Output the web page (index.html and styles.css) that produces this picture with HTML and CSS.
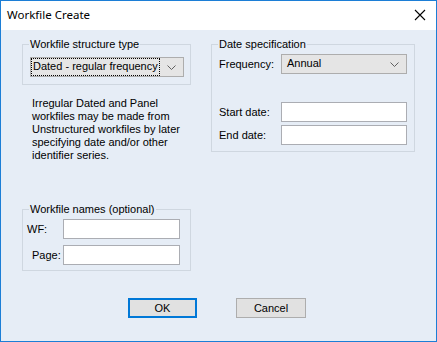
FILE: index.html
```html
<!DOCTYPE html>
<html>
<head>
<meta charset="utf-8">
<link rel="stylesheet" href="styles.css">
</head>
<body>
<div class="window">
  <div class="titlebar">
    <span class="title">Workfile Create</span>
    <svg class="close" width="12" height="12" viewBox="0 0 12 12"><path d="M1 1L11 11M11 1L1 11" stroke="#000" stroke-width="1.1" fill="none"/></svg>
  </div>
  <div class="content">
    <div class="columns">
      <div class="left">
        <fieldset class="group g-struct">
          <legend>Workfile structure type</legend>
          <div class="select">
            <span class="value focus">Dated - regular frequency</span>
            <svg class="chev" width="9" height="5" viewBox="0 0 9 5"><path d="M0.5 0.5L4.5 4.5L8.5 0.5" stroke="#606060" stroke-width="1" fill="none"/></svg>
          </div>
        </fieldset>
        <p class="note">Irregular Dated and Panel<br>workfiles may be made from<br>Unstructured workfiles by later<br>specifying date and/or other<br>identifier series.</p>
        <fieldset class="group g-names">
          <legend>Workfile names (optional)</legend>
          <div class="row">
            <span class="lbl lbl-wf">WF:</span>
            <div class="input"></div>
          </div>
          <div class="row row-page">
            <span class="lbl lbl-page">Page:</span>
            <div class="input"></div>
          </div>
        </fieldset>
      </div>
      <div class="right">
        <fieldset class="group g-date">
          <legend>Date specification</legend>
          <div class="row">
            <span class="lbl lbl-date">Frequency:</span>
            <div class="select select-freq">
              <span class="value">Annual</span>
              <svg class="chev" width="9" height="5" viewBox="0 0 9 5"><path d="M0.5 0.5L4.5 4.5L8.5 0.5" stroke="#606060" stroke-width="1" fill="none"/></svg>
            </div>
          </div>
          <div class="row row-start">
            <span class="lbl lbl-date">Start date:</span>
            <div class="input input-date"></div>
          </div>
          <div class="row row-end">
            <span class="lbl lbl-date">End date:</span>
            <div class="input input-date"></div>
          </div>
        </fieldset>
      </div>
    </div>
    <div class="buttons">
      <div class="btn btn-default">OK</div>
      <div class="btn">Cancel</div>
    </div>
  </div>
</div>
</body>
</html>
```

FILE: styles.css
```css
* { box-sizing: border-box; }
html, body { margin: 0; padding: 0; background: #fff; }
body {
  font-family: "Liberation Sans", Arial, sans-serif;
  font-size: 11px;
  color: #000;
}
.window {
  width: 437px;
  height: 342px;
  border: 1px solid #1c7ed6;
  display: flex;
  flex-direction: column;
}
.titlebar {
  height: 29px;
  background: #fff;
  display: flex;
  align-items: center;
  justify-content: space-between;
  padding: 0 10px 2px 6px;
}
.title {
  font-family: "Noto Sans", sans-serif;
  font-size: 11.5px;
  color: #000;
}
.close { display: block; }
.content {
  flex: 1;
  background: #e6edf6;
  padding: 8px 0 0 21px;
  display: flex;
  flex-direction: column;
}
.columns { display: flex; }
.left { width: 169px; display: flex; flex-direction: column; }
.right { width: 204px; margin-left: 20px; }
.group {
  margin: 0;
  border: 1px solid #cfd7e0;
  min-width: 0;
  line-height: 13px;
}
.group legend {
  padding: 0 1px;
  margin-left: -1px;
  line-height: 13px;
  white-space: nowrap;
}
.g-struct { padding: 6px 6px 7px 7px; }
.select {
  height: 20px;
  border: 1px solid #adadad;
  background: #e5e5e5;
  display: flex;
  align-items: center;
  justify-content: space-between;
  padding: 0 7px 0 1px;
}
.value { padding: 1px 1px 2px 1px; line-height: 13px; white-space: nowrap; }
.focus { outline: 1px dotted #000; outline-offset: 0; }
.chev { display: block; flex: none; }
.note {
  margin: 12px 0 0 10px;
  line-height: 13px;
  white-space: nowrap;
}
.g-names {
  margin-top: 41px;
  padding: 3px 10px 5px 7px;
}
.row { display: flex; align-items: center; }
.row-page { margin-top: 6px; }
.lbl { flex: none; white-space: nowrap; }
.lbl-wf { width: 36px; margin-left: -3px; }
.lbl-page { width: 31px; margin-left: 2px; }
.input {
  height: 20px;
  flex: 1;
  background: #fff;
  border: 1px solid #abadb3;
}
.g-date { padding: 3px 7px 6px 7px; }
.lbl-date { width: 62px; }
.select-freq { flex: 1; padding-left: 2px; }
.select-freq .value { padding-left: 3px; }
.row-start { margin-top: 28px; }
.row-end { margin-top: 3px; }
.buttons {
  display: flex;
  gap: 39px;
  margin-top: 27px;
  margin-left: 106px;
}
.btn {
  width: 69px;
  height: 20px;
  background: #e1e1e1;
  border: 1px solid #adadad;
  display: flex;
  align-items: center;
  justify-content: center;
  font-size: 11px;
}
.btn + .btn { width: 70px; }
.btn-default { border: 2px solid #0078d7; }
```
